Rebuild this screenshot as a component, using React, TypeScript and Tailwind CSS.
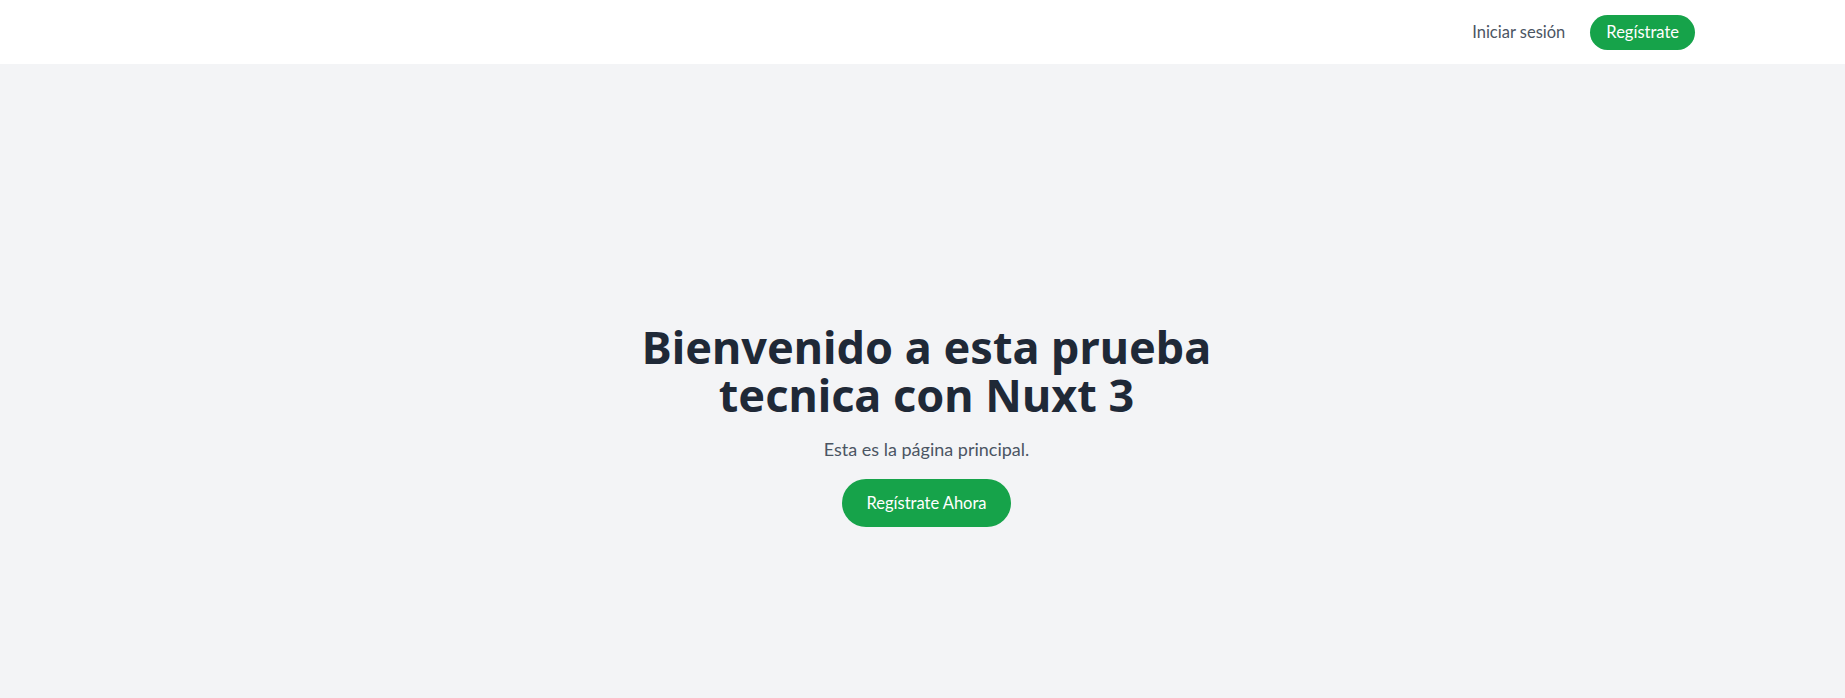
import React from "react";

export default function App() {
  return (
    <div
      className="min-h-screen bg-[#f3f4f6]"
      style={{ fontFamily: 'Lato, "Noto Sans", sans-serif' }}
    >
      <header className="h-16 bg-white flex items-center justify-end pr-[150px]">
        <nav className="flex items-center gap-[25px]">
          <a className="text-[#4b5563] text-[16.5px] leading-6">Iniciar sesión</a>
          <button className="bg-[#16a34a] text-white text-[16.5px] leading-6 h-[35px] px-4 rounded-full">
            Regístrate
          </button>
        </nav>
      </header>
      <main className="h-[634px] flex flex-col items-center pt-[259px] pl-2">
        <h1
          className="text-[45px] leading-[48px] font-bold text-[#1f2937] text-center whitespace-nowrap"
          style={{ fontFamily: '"Noto Sans", Lato, sans-serif' }}
        >
          Bienvenido a esta prueba
          <br />
          tecnica con Nuxt 3
        </h1>
        <p className="mt-4 text-lg leading-7 text-[#4b5563]">Esta es la página principal.</p>
        <button className="mt-4 bg-[#16a34a] text-white text-[16.5px] leading-6 px-6 py-3 rounded-full">
          Regístrate Ahora
        </button>
      </main>
    </div>
  );
}
